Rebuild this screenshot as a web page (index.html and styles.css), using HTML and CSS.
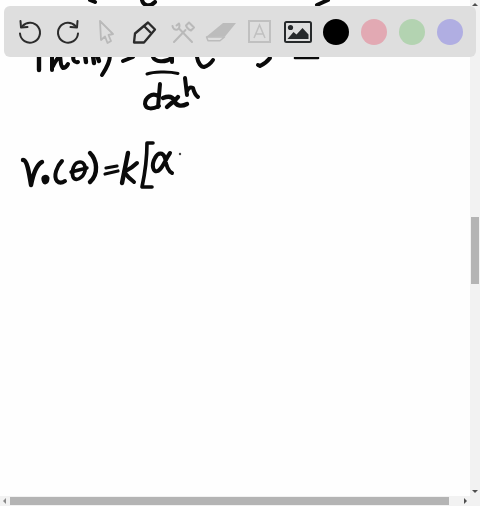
FILE: index.html
```html
<!DOCTYPE html>
<html lang="en">
<head>
<meta charset="utf-8">
<title>Whiteboard</title>
<link rel="stylesheet" href="styles.css">
</head>
<body>
<div class="board">
  <svg class="ink" width="470" height="496" viewBox="0 0 470 496" fill="none" stroke="#0a0a0a" stroke-linecap="round" stroke-linejoin="round" stroke-width="4">
    <!-- strokes running under the toolbar -->
    <path d="M90 0 L95 2"/>
    <path d="M142 0 C143 5 149 8 155 2"/>
    <path d="M317 5 L328 0"/>
    <path d="M270 58 C267 62 264 64 260 66 L258 65"/>
    <path d="M295 58 L318 58" stroke-width="2.600"/>
    <!-- r n ( n ) = -->
    <path d="M39 55 L39 70" stroke-width="4.400"/>
    <path d="M52 55 L52 70 M53 66 C55 62 57 58 60 56 C61 60 60 66 63 68 C65 68 67 66 68 64"/>
    <path d="M74 55 C72 59 74 63 78 62"/>
    <path d="M85 55 L86 62" stroke-width="4.400"/>
    <path d="M93 56 L94 63 M97 55 L99 61" stroke-width="4.400"/>
    <path d="M110 55 C110 62 106 69 102 75"/>
    <path d="M123 61 L133 57"/>
    <!-- fraction -->
    <path d="M153 57 C155 62 165 63 172 58 L172 62"/>
    <path d="M147 74 C153 72 168 71 178 73.500" stroke-width="3"/>
    <path d="M160 84 L158 107 M158 96 C152 92 145 98 145 104 C146 110 153 109 159 106"/>
    <path d="M163 98 C168 96 172 96 174 100 C176 106 181 107 187 104 M167 107 C171 103 175 101 178 97" stroke-width="4.400"/>
    <path d="M185 78 L187 95 M187 91 C189 87 191 87 193 88 C194 92 195 95 198 97"/>
    <path d="M197 57 C198 63 201 67 204 67 C208 66 211 63 213 60"/>
    <!-- V0(θ)=k[α -->
    <path d="M23 160 C27 160 29 172 31 185 C33 175 36 165 42 162" stroke-width="4.400"/>
    <path d="M43 180 C42 176 47 175 48 178 C48 183 44 185 43 180 Z" fill="#0a0a0a" stroke-width="3"/>
    <path d="M62 161 C57 166 53 176 57 181 C59 183 62 183 65 181"/>
    <path d="M80 162 C74 162 71 171 73 177 C76 182 83 178 85 171 C86 165 83 162 80 162 Z" stroke-width="3.600"/>
    <path d="M71 172 L87 168" stroke-width="3.400"/>
    <path d="M90 153 C97 160 99 174 90 182" stroke-width="4.400"/>
    <path d="M106 168 L117 166 M105 174 L118 171" stroke-width="3.200"/>
    <path d="M128 153 L122 183" stroke-width="4.400"/>
    <path d="M137 163 C133 167 128 170 124 172 C127 176 130 179 134 182"/>
    <path d="M153 143 L147 143 C147 157 145 173 142 187 L152 187" stroke-width="3.600"/>
    <path d="M170 153 C165 160 163 168 158 171 C153 173 151 165 155 158 C158 152 163 152 165 158 C166 165 168 171 172 173"/>
    <circle cx="180" cy="154" r="1.200" fill="#444444" stroke="none"/>
  </svg>

  <div class="scroll-v">
    <span class="arrow arrow-up"></span>
    <span class="thumb-v"></span>
    <span class="arrow arrow-down"></span>
  </div>
  <div class="scroll-h">
    <span class="arrow arrow-left"></span>
    <span class="thumb-h"></span>
    <span class="arrow arrow-right"></span>
  </div>
  <div class="corner"></div>

  <div class="toolbar">
    <svg class="icon" width="26" height="26" viewBox="0 0 26 26" fill="none" stroke="#2b2b2b" stroke-width="2" stroke-linecap="round" stroke-linejoin="round">
      <path d="M5.500 7 A10 10 0 1 1 3 14.500"/><path d="M3.500 2 L4 8.500 L10.500 8"/>
    </svg>
    <svg class="icon" width="26" height="26" viewBox="0 0 26 26" fill="none" stroke="#2b2b2b" stroke-width="2" stroke-linecap="round" stroke-linejoin="round">
      <path d="M20.500 7 A10 10 0 1 0 23 14.500"/><path d="M22.500 2 L22 8.500 L15.500 8"/>
    </svg>
    <svg class="icon" width="26" height="26" viewBox="0 0 26 26" fill="none" stroke="#b9b9b9" stroke-width="1.800" stroke-linejoin="round">
      <path d="M7 2 L20 15 L15.500 16 L18 22 L14.500 24 L12 17.500 L8 21 Z"/>
    </svg>
    <svg class="icon" width="26" height="26" viewBox="0 0 26 26" fill="none" stroke="#2b2b2b" stroke-width="2.300" stroke-linejoin="round">
      <path d="M2 23.500 L3 14.500 L16 3.500 L23 10.500 L12 23.500 Z"/><path d="M12 7 L19 14"/>
    </svg>
    <svg class="icon" width="26" height="26" viewBox="0 0 26 26" fill="none" stroke="#b9b9b9" stroke-width="2" stroke-linecap="round" stroke-linejoin="round">
      <path d="M4 23 L15.500 11 M22 23 L9.500 10"/><path d="M2.500 7 C3 10 5 11 7.500 10.500 C9.500 9.500 10 6.500 9 4.500 L6.500 6.500 M16 6.500 L19 3.500 L24 8.500 L21 11.500 L19 10.500 L17 8.500 Z"/>
    </svg>
    <svg class="icon" width="32" height="20" viewBox="0 0 32 20">
      <path d="M1 15 L18 1 L31 1 L20 14.500 Z" fill="#bcbcbc"/>
      <path d="M1.500 15 L19.500 15 L15 18.800 L3 18.800 Z" fill="none" stroke="#bcbcbc" stroke-width="1.500" stroke-linejoin="round"/>
    </svg>
    <svg class="icon" width="23" height="23" viewBox="0 0 23 23">
      <rect x="1" y="1" width="21" height="21" fill="none" stroke="#c0c0c0" stroke-width="2"/>
      <path d="M6 18 L11.500 5 L17 18 M7.800 14 L15.200 14" fill="none" stroke="#c0c0c0" stroke-width="1.500"/>
    </svg>
    <svg class="icon icon-image" width="28" height="22" viewBox="0 0 28 22">
      <rect x="1" y="1" width="26" height="20" rx="1.500" fill="none" stroke="#26292b" stroke-width="2"/>
      <circle cx="6.500" cy="6.500" r="2.600" fill="#26292b"/>
      <path d="M3.500 18 L9.500 11 L12.500 13.500 L18.500 7 L24.500 13.500 L24.500 18 Z" fill="#26292b"/>
    </svg>
    <span class="swatch swatch-black"></span>
    <span class="swatch swatch-pink"></span>
    <span class="swatch swatch-green"></span>
    <span class="swatch swatch-blue"></span>
  </div>
</div>
</body>
</html>
```
FILE: styles.css
```css
html, body {
  margin: 0;
  padding: 0;
  background: #ffffff;
  overflow: hidden;
}

.board {
  position: relative;
  width: 480px;
  height: 506px;
  overflow: hidden;
  background: #fefefe;
}

.ink {
  position: absolute;
  left: 0;
  top: 0;
  display: block;
}

.toolbar {
  position: absolute;
  left: 4px;
  top: 6px;
  width: 472px;
  height: 51px;
  box-sizing: border-box;
  padding: 0 7px;
  display: grid;
  grid-template-columns: repeat(12, 38.200px);
  align-items: center;
  justify-items: center;
  background: #dedede;
  border-radius: 6px;
}

.icon {
  display: block;
}

.icon-image {
  margin-left: 2px;
}

.swatch {
  display: block;
  width: 26px;
  height: 26px;
  border-radius: 50%;
}

.swatch-black { background: #000000; }
.swatch-pink { background: #e2a9b3; }
.swatch-green { background: #b3d3b1; }
.swatch-blue { background: #b0aee2; }

.scroll-v {
  position: absolute;
  right: 0;
  top: 0;
  width: 10px;
  height: 496px;
  background: #f2f2f2;
  display: flex;
  flex-direction: column;
  align-items: center;
  justify-content: space-between;
}

.thumb-v {
  position: absolute;
  left: 1px;
  top: 217px;
  width: 8px;
  height: 67px;
  background: #b4b4b4;
}

.scroll-h {
  position: absolute;
  left: 0;
  bottom: 0;
  width: 470px;
  height: 10px;
  background: #f2f2f2;
  display: flex;
  align-items: center;
  justify-content: space-between;
}

.thumb-h {
  position: absolute;
  left: 10px;
  top: 1px;
  width: 439px;
  height: 8px;
  background: #b4b4b4;
}

.corner {
  position: absolute;
  right: 0;
  bottom: 0;
  width: 10px;
  height: 10px;
  background: #f2f2f2;
}

.arrow {
  display: block;
  width: 0;
  height: 0;
  border-style: solid;
  border-color: transparent;
}

.arrow-up {
  margin-top: 3px;
  border-width: 0 3px 3px 3px;
  border-bottom-color: #505050;
}

.arrow-down {
  margin-bottom: 3px;
  border-width: 3px 3px 0 3px;
  border-top-color: #505050;
}

.arrow-left {
  margin-left: 3px;
  border-width: 3px 3px 3px 0;
  border-right-color: #8a8a8a;
}

.arrow-right {
  margin-right: 3px;
  border-width: 3px 0 3px 3px;
  border-left-color: #505050;
}
```
